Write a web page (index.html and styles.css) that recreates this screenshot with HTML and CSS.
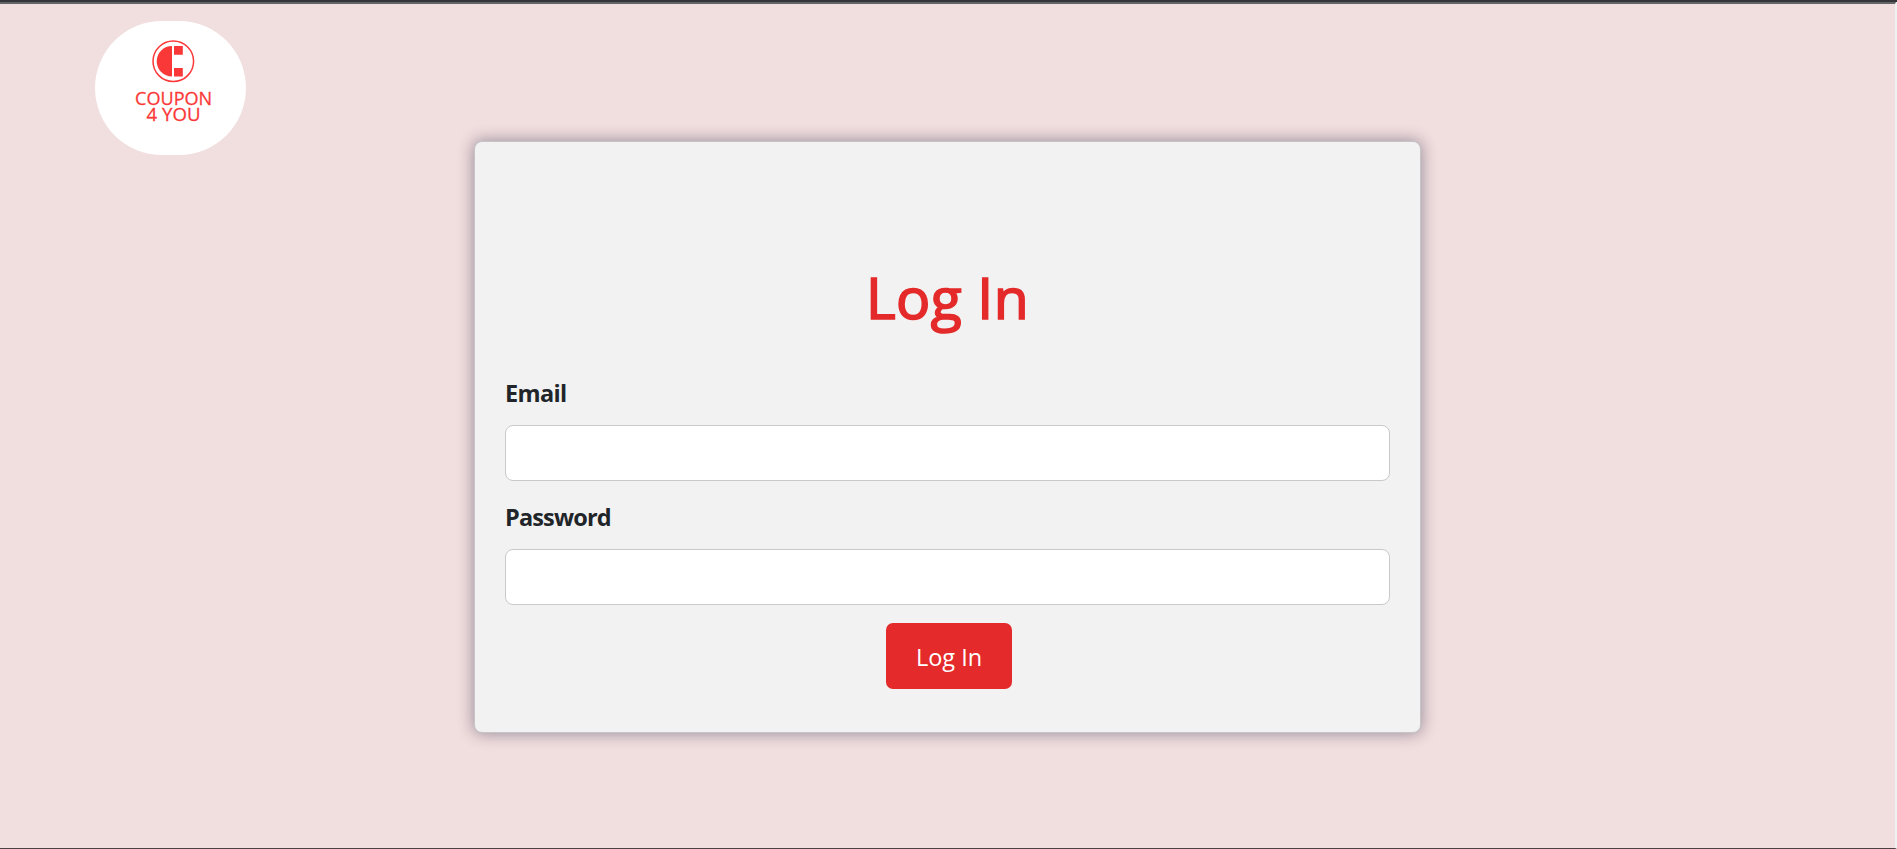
FILE: index.html
```html
<!DOCTYPE html>
<html lang="en">
<head>
<meta charset="utf-8">
<title>Coupon 4 You</title>
<link rel="stylesheet" href="styles.css">
</head>
<body>
<header class="logo">
  <svg class="logo-art" viewBox="0 0 151 134" role="img" aria-label="Coupon 4 You">
    <g fill="#fb3838">
      <circle cx="78.3" cy="40.3" r="20.3" fill="none" stroke="#fb3838" stroke-width="1.5"/>
      <path d="M77 25A15.3 15.3 0 0 0 77 55.6Z"/>
      <path d="M79 25h8.8v8.8H79zM79 46.9h8.8v8.7H79z"/>
      <text class="logo-text" x="78.6" y="83.5" textLength="77" lengthAdjust="spacingAndGlyphs">COUPON</text>
      <text class="logo-text" x="78.6" y="100.4" textLength="54" lengthAdjust="spacingAndGlyphs">4 YOU</text>
    </g>
  </svg>
</header>
<main class="card">
  <h1 class="title">Log In</h1>
  <form class="form">
    <label class="label label-email" for="email">Email</label>
    <input class="input" id="email" type="email">
    <label class="label" for="password">Password</label>
    <input class="input" id="password" type="password">
    <button class="button" type="button">Log In</button>
  </form>
</main>
</body>
</html>
```
FILE: styles.css
```css
* { box-sizing: border-box; }
body {
  margin: 0;
  height: 849px;
  overflow: hidden;
  display: flex;
  flex-direction: column;
  background: #f1dede;
  border-top: 4px solid #636569;
  border-right: 2px solid #f1f1f1;
  border-bottom: 1px solid #4b4145;
  font-family: "Open Sans", "Noto Sans", sans-serif;
  color: #212529;
}
body::before {
  content: "";
  position: absolute;
  top: 0;
  left: 0;
  width: 100%;
  height: 2px;
  background: #343539;
}
.logo {
  width: 151px;
  height: 134px;
  margin: 17px 0 0 95px;
  border-radius: 67px;
  background: #fff;
  flex: none;
}
.logo-art { display: block; width: 151px; height: 134px; }
.logo-text {
  font: 19px "Open Sans", sans-serif;
  text-anchor: middle;
  stroke: #fb3838;
  stroke-width: .3px;
}
.card {
  width: 947px;
  height: 592px;
  flex: none;
  margin: -14px 0 0 474px;
  padding: 113px 30px 0;
  background: #f2f2f2;
  border: 1px solid #c6c4c7;
  border-radius: 8px;
  box-shadow: 0 0 15px 1px rgba(60, 55, 85, .47);
}
.title {
  margin: 0;
  height: 86px;
  line-height: 84px;
  font-size: 57px;
  font-weight: 500;
  text-align: center;
  color: #e42a2a;
  letter-spacing: .4px;
  -webkit-text-stroke: 1.7px #e42a2a;
}
.form { display: flex; flex-direction: column; padding-top: 34px; }
.label {
  height: 50px;
  line-height: 36px;
  font-size: 23.5px;
  font-weight: 700;
  letter-spacing: -.85px;
}
.label-email { letter-spacing: -.65px; }
.input {
  width: 885px;
  height: 56px;
  margin: 0 0 18px;
  background: #fff;
  border: 1px solid #c9c9c9;
  border-radius: 8px;
}
.button {
  width: 126px;
  height: 66px;
  margin-left: 381px;
  padding: 2px 0 0;
  border: 0;
  border-radius: 7px;
  background: #e42a2a;
  color: #fff;
  font: 23.5px "Open Sans", sans-serif;
}
```
